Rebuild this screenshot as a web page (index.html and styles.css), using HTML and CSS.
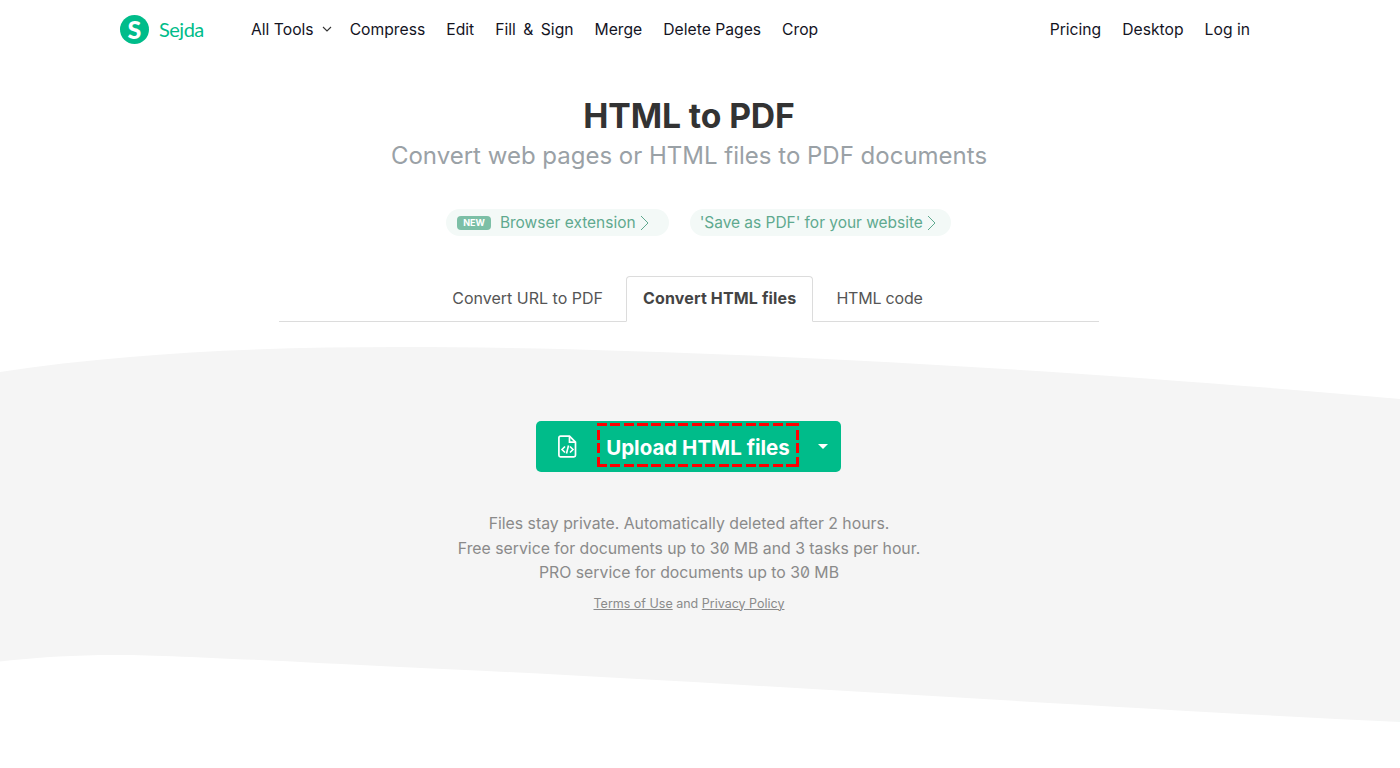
FILE: index.html
```html
<!DOCTYPE html>
<html lang="en">
<head>
<meta charset="utf-8">
<title>HTML to PDF</title>
<link rel="stylesheet" href="styles.css">
</head>
<body>
<svg class="wave" width="1400" height="768" viewBox="0 0 1400 768" aria-hidden="true">
  <path class="wave-fill" d="M0 372 C130 352 270 347 400 347 C700 347 1100 372 1400 399 L1400 722 C1100 708 700 680 400 667 C260 660 150 654 100 655 C60 656 30 658 0 661.500 Z"/>
</svg>
<header class="top">
  <a class="brand" href="#">
    <span class="logo">S</span>
    <span class="brand-name">Sejda</span>
  </a>
  <nav class="nav">
    <a href="#" class="nav-drop">All Tools
      <svg width="10" height="6" viewBox="0 0 10 6"><path d="M1 1l4 4 4-4" fill="none" stroke="#333" stroke-width="1.1"/></svg>
    </a>
    <a href="#">Compress</a>
    <a href="#">Edit</a>
    <a href="#" class="nav-wide">Fill &amp; Sign</a>
    <a href="#">Merge</a>
    <a href="#">Delete Pages</a>
    <a href="#">Crop</a>
  </nav>
  <nav class="nav nav-right">
    <a href="#">Pricing</a>
    <a href="#">Desktop</a>
    <a href="#">Log in</a>
  </nav>
</header>
<main class="main">
  <h1 class="title">HTML to PDF</h1>
  <p class="subtitle">Convert web pages or HTML files to PDF documents</p>
  <div class="promos">
    <a class="promo promo-a" href="#"><span class="badge">NEW</span>Browser extension<svg class="chev" width="9" height="16" viewBox="0 0 9 16"><path d="M1 1l7 7-7 7" fill="none" stroke="#5fa98f" stroke-width="1"/></svg></a>
    <a class="promo promo-b" href="#">'Save as PDF' for your website<svg class="chev" width="9" height="16" viewBox="0 0 9 16"><path d="M1 1l7 7-7 7" fill="none" stroke="#5fa98f" stroke-width="1"/></svg></a>
  </div>
  <div class="tabs">
    <a class="tab" href="#">Convert URL to PDF</a>
    <a class="tab tab-active" href="#">Convert HTML files</a>
    <a class="tab tab-code" href="#">HTML code</a>
  </div>
  <div class="upload">
    <span class="upload-icon">
      <svg width="19" height="23" viewBox="0 0 19 23"><path d="M2.5 1.2h9l6 6v13a1.600 1.600 0 0 1-1.600 1.600H2.500a1.600 1.600 0 0 1-1.600-1.600V2.800a1.600 1.600 0 0 1 1.600-1.600z" fill="none" stroke="#fff" stroke-width="1.7"/><path d="M11.500 1.200v6h6" fill="none" stroke="#fff" stroke-width="1.7"/><path d="M7 11.500l-3 3 3 3M12 11.500l3 3-3 3M10.500 10.500l-2 8" fill="none" stroke="#fff" stroke-width="1.6"/></svg>
    </span>
    <span class="upload-label">Upload HTML files</span>
    <span class="upload-caret"></span>
  </div>
  <div class="info">
    <p>Files stay private. Automatically deleted after 2 hours.</p>
    <p>Free service for documents up to 30 MB and 3 tasks per hour.</p>
    <p>PRO service for documents up to 30 MB</p>
  </div>
  <p class="legal"><a href="#">Terms of Use</a> and <a href="#">Privacy Policy</a></p>
</main>
</body>
</html>
```
FILE: styles.css
```css
* { box-sizing: border-box; }
html, body { margin: 0; padding: 0; }
body {
  position: relative;
  width: 1400px;
  height: 768px;
  overflow: hidden;
  background: #fff;
  font-family: Inter, "Liberation Sans", sans-serif;
  color: #333;
}
a { color: inherit; text-decoration: none; }
p { margin: 0; }

.wave { position: absolute; left: 0; top: 0; }
.wave-fill { fill: #f5f5f5; }

.top {
  position: relative;
  display: flex;
  align-items: center;
  height: 58px;
  padding: 0 150px 0 120px;
}
.brand { display: flex; align-items: center; gap: 10px; width: 131px; }
.logo {
  display: flex;
  align-items: center;
  justify-content: center;
  width: 29px;
  height: 29px;
  border-radius: 50%;
  background: #00bc8a;
  color: #fff;
  font: 900 25px/29px Lato, sans-serif;
}
.brand-name { font: 400 20px Lato, sans-serif; color: #00bc8a; letter-spacing: -0.5px; }
.nav { display: flex; gap: 21px; font-size: 15.7px; color: #14141f; }
.nav-right { margin-left: auto; }
.nav-drop { display: flex; align-items: center; gap: 8px; margin-right: -3px; }
.nav-wide { word-spacing: 3px; }

.main { position: relative; display: flex; flex-direction: column; align-items: center; width: 1378px; }
.title {
  margin: 38px 0 0;
  font-size: 33.7px;
  line-height: 39px;
  font-weight: 700;
  letter-spacing: -0.1px;
  color: #333;
}
.subtitle { margin-top: 6px; font-size: 24px; line-height: 30px; color: #9aa1a6; }

.promos { display: flex; gap: 21px; margin-top: 38px; padding-left: 19px; }
.promo {
  display: flex;
  align-items: center;
  height: 27px;
  border-radius: 14px;
  background: #f3f9f7;
  font-size: 15.5px;
  color: #5fa98f;
}
.promo-a { padding: 0 20px 0 11px; }
.promo-b { padding: 0 15px 0 10px; letter-spacing: -0.03px; }
.badge {
  margin-right: 9px;
  padding: 0 6px;
  height: 14px;
  line-height: 14px;
  border-radius: 4px;
  background: #7cbfa6;
  color: #fff;
  font-size: 9px;
  font-weight: 700;
}
.chev { margin-left: 4px; }

.tabs {
  display: flex;
  justify-content: center;
  width: 820px;
  height: 46px;
  margin-top: 40px;
  padding-right: 3px;
  border-bottom: 1px solid #dcdcdc;
}
.tab {
  display: flex;
  align-items: center;
  height: 46px;
  padding: 0 23px 2px;
  font-size: 16px;
  color: #555;
}
.tab-code { letter-spacing: -0.2px; }
.tab-active {
  padding: 0 16px 2px;
  border: 1px solid #dcdcdc;
  border-bottom-color: #fff;
  border-radius: 4px 4px 0 0;
  background: #fff;
  font-weight: 700;
  letter-spacing: 0.15px;
  color: #444;
}

.upload {
  display: flex;
  align-items: center;
  width: 305px;
  height: 51px;
  margin-top: 99px;
  margin-right: 1px;
  border-radius: 5px;
  background: #00bc8a;
  color: #fff;
}
.upload-icon { display: flex; justify-content: center; width: 61px; padding-left: 2px; }
.upload-label {
  display: flex;
  align-items: center;
  justify-content: center;
  width: 202px;
  height: 44px;
  margin-top: -3px;
  padding-top: 5px;
  font-size: 20.5px;
  font-weight: 700;
  background:
    repeating-linear-gradient(90deg, #f00 0 10px, transparent 10px 13.5px) left top / 100% 3px no-repeat,
    repeating-linear-gradient(90deg, #f00 0 10px, transparent 10px 13.5px) left bottom / 100% 3px no-repeat,
    repeating-linear-gradient(0deg, #f00 0 10px, transparent 10px 13.5px) left top / 3px 100% no-repeat,
    repeating-linear-gradient(0deg, #f00 0 10px, transparent 10px 13.5px) right top / 3px 100% no-repeat;
}
.upload-caret {
  margin-left: 19px;
  border-left: 5px solid transparent;
  border-right: 5px solid transparent;
  border-top: 5px solid #fff;
}

.info {
  margin-top: 40px;
  text-align: center;
  font-size: 15.8px;
  line-height: 24.5px;
  color: #8a8a8a;
  font-feature-settings: "zero" 1;
}
.legal { margin-top: 8px; font-size: 12.5px; line-height: 20px; color: #8a8a8a; }
.legal a { text-decoration: underline; }
```
